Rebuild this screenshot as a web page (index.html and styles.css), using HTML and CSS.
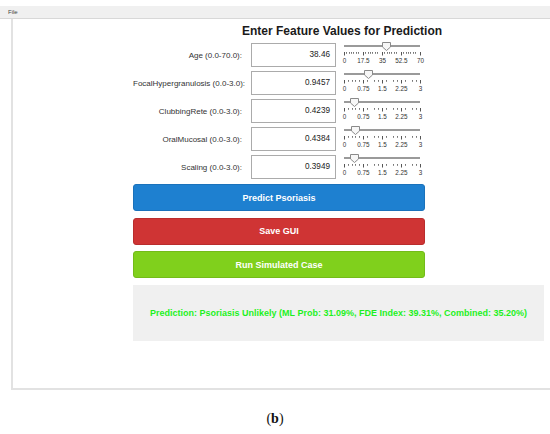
FILE: index.html
```html
<!DOCTYPE html>
<html>
<head>
<meta charset="utf-8">
<link rel="stylesheet" href="styles.css">
</head>
<body>
<div class="menubar"><span>File</span></div>
<div class="window">
  <div class="form">
    <div class="title">Enter Feature Values for Prediction</div>
    <div class="fields">
      <div class="label">Age (0.0-70.0):</div>
      <div class="value">38.46</div>
      <div class="slider">
        <div class="track"></div>
        <svg class="thumb" style="left:45.7px" width="9" height="9" viewBox="0 0 9 9"><path d="M0.5 0.5H8.5V5L4.5 8.5L0.5 5Z"/></svg>
        <div class="ticks ticks-age"></div>
        <div class="ticklabels"><span>0</span><span>17.5</span><span>35</span><span>52.5</span><span>70</span></div>
      </div>

      <div class="label">FocalHypergranulosis (0.0-3.0):</div>
      <div class="value">0.9457</div>
      <div class="slider">
        <div class="track"></div>
        <svg class="thumb" style="left:27.5px" width="9" height="9" viewBox="0 0 9 9"><path d="M0.5 0.5H8.5V5L4.5 8.5L0.5 5Z"/></svg>
        <div class="ticks ticks-small"></div>
        <div class="ticklabels"><span>0</span><span>0.75</span><span>1.5</span><span>2.25</span><span>3</span></div>
      </div>

      <div class="label">ClubbingRete (0.0-3.0):</div>
      <div class="value">0.4239</div>
      <div class="slider">
        <div class="track"></div>
        <svg class="thumb" style="left:14.2px" width="9" height="9" viewBox="0 0 9 9"><path d="M0.5 0.5H8.5V5L4.5 8.5L0.5 5Z"/></svg>
        <div class="ticks ticks-small"></div>
        <div class="ticklabels"><span>0</span><span>0.75</span><span>1.5</span><span>2.25</span><span>3</span></div>
      </div>

      <div class="label">OralMucosal (0.0-3.0):</div>
      <div class="value">0.4384</div>
      <div class="slider">
        <div class="track"></div>
        <svg class="thumb" style="left:14.6px" width="9" height="9" viewBox="0 0 9 9"><path d="M0.5 0.5H8.5V5L4.5 8.5L0.5 5Z"/></svg>
        <div class="ticks ticks-small"></div>
        <div class="ticklabels"><span>0</span><span>0.75</span><span>1.5</span><span>2.25</span><span>3</span></div>
      </div>

      <div class="label">Scaling (0.0-3.0):</div>
      <div class="value">0.3949</div>
      <div class="slider">
        <div class="track"></div>
        <svg class="thumb" style="left:13.5px" width="9" height="9" viewBox="0 0 9 9"><path d="M0.5 0.5H8.5V5L4.5 8.5L0.5 5Z"/></svg>
        <div class="ticks ticks-small"></div>
        <div class="ticklabels"><span>0</span><span>0.75</span><span>1.5</span><span>2.25</span><span>3</span></div>
      </div>
    </div>

    <div class="buttons">
      <div class="btn btn-blue">Predict Psoriasis</div>
      <div class="btn btn-red">Save GUI</div>
      <div class="btn btn-green">Run Simulated Case</div>
    </div>

    <div class="result">Prediction: Psoriasis Unlikely (ML Prob: 31.09%, FDE Index: 39.31%, Combined: 35.20%)</div>
  </div>
</div>
<div class="caption">(<b>b</b>)</div>
</body>
</html>
```

FILE: styles.css
```css
html, body {
  margin: 0;
  padding: 0;
  background: #ffffff;
}

body {
  font-family: "Liberation Sans", Arial, sans-serif;
  color: #333;
}

.menubar {
  margin-top: 6px;
  height: 12px;
  background: #f0f0f0;
  border-bottom: 1px solid #d8d8d8;
  display: flex;
  align-items: center;
  padding-left: 8px;
  font-size: 6px;
  color: #444;
}

.window {
  margin-left: 11px;
  height: 371px;
  box-sizing: border-box;
  border-left: 2px solid #e2e2e2;
  border-bottom: 2px solid #e2e2e2;
}

.form {
  margin-left: 120px;
  width: 292px;
  padding-top: 5px;
}

.title {
  font-size: 12px;
  line-height: 14px;
  font-weight: bold;
  color: #1a1a1a;
  width: max-content;
  margin-left: 109px;
  margin-bottom: 5px;
}

.fields {
  display: grid;
  grid-template-columns: 118px 85px 89px;
  grid-auto-rows: 24px;
  row-gap: 4px;
}

.label {
  font-size: 8px;
  color: #333;
  text-align: right;
  padding-right: 9px;
  white-space: nowrap;
  align-self: center;
}

.value {
  box-sizing: border-box;
  border: 1px solid #ababab;
  background: #fff;
  text-align: right;
  padding-right: 5px;
  font-size: 8.2px;
  line-height: 22px;
  color: #222;
}

.slider {
  position: relative;
  padding-top: 2px;
}

.track {
  margin-left: 8px;
  width: 76px;
  height: 1.5px;
  background: #9a9a9a;
}

.thumb {
  position: absolute;
  top: -1px;
}

.thumb path {
  fill: #f7f7f7;
  stroke: #8a8a8a;
  stroke-width: 1;
}

.ticks {
  margin-left: 8px;
  margin-top: 5.5px;
  width: 77px;
  height: 3.5px;
  background-repeat: no-repeat;
}

.ticks-age {
  background-image:
    repeating-linear-gradient(to right, #555 0 1px, transparent 1px 19px),
    repeating-linear-gradient(to right, #777 0 0.8px, transparent 0.8px 2.375px);
  background-size: 77px 3.5px, 77px 1.8px;
}

.ticks-small {
  background-image:
    repeating-linear-gradient(to right, #555 0 1px, transparent 1px 19px),
    repeating-linear-gradient(to right, #777 0 0.9px, transparent 0.9px 3.8px);
  background-size: 77px 3.5px, 77px 1.8px;
}

.ticklabels {
  display: grid;
  grid-template-columns: repeat(5, 19px);
  margin-left: -1px;
  margin-top: 1px;
  font-size: 6.3px;
  line-height: 7px;
  color: #333;
}

.ticklabels span {
  text-align: center;
  white-space: nowrap;
}

.buttons {
  margin-top: 5px;
  display: flex;
  flex-direction: column;
  gap: 6.5px;
}

.btn {
  height: 27px;
  border-radius: 3px;
  display: flex;
  align-items: center;
  justify-content: center;
  color: #fff;
  font-weight: bold;
  font-size: 9px;
  box-sizing: border-box;
}

.btn-blue {
  background: #1e80d0;
  border: 1px solid #1a72bb;
}

.btn-red {
  background: #cf3434;
  border: 1px solid #b92d2d;
}

.btn-green {
  background: #80d01c;
  border: 1px solid #73bb19;
}

.result {
  margin-top: 7px;
  width: 411px;
  height: 56px;
  background: #f0f0f0;
  display: flex;
  align-items: center;
  justify-content: center;
  font-weight: bold;
  font-size: 9px;
  color: #1ef01e;
  white-space: nowrap;
}

.caption {
  text-align: center;
  font-family: "Liberation Serif", "Times New Roman", serif;
  font-size: 14px;
  line-height: 16px;
  color: #111;
  margin-top: 21px;
}
```
